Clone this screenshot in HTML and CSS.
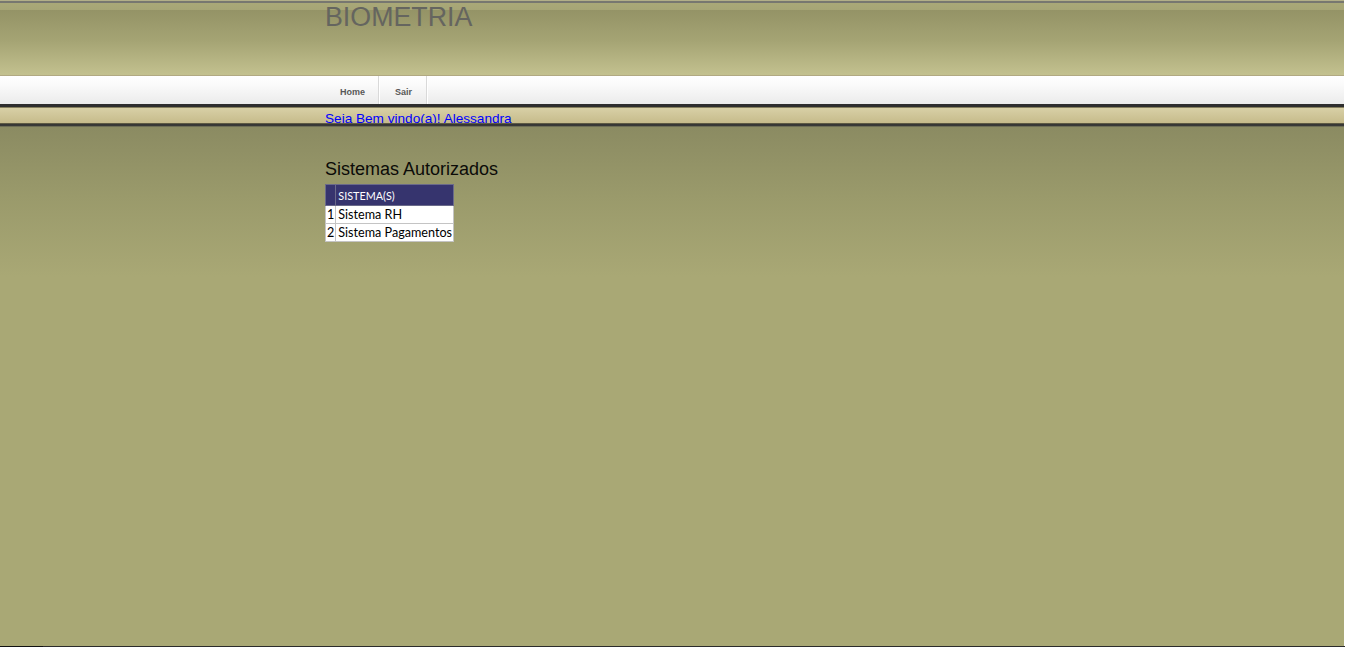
FILE: index.html
```html
<!DOCTYPE html>
<html lang="pt">
<head>
<meta charset="utf-8">
<title>BIOMETRIA</title>
<link rel="stylesheet" href="styles.css">
</head>
<body>
<div class="page">
  <header class="header">
    <div class="wrap">
      <h1 class="brand">BIOMETRIA</h1>
    </div>
  </header>
  <nav class="nav">
    <div class="wrap nav-inner">
      <a class="nav-item" href="#">Home</a>
      <a class="nav-item" href="#">Sair</a>
    </div>
  </nav>
  <div class="rule-dark"></div>
  <div class="welcome-band">
    <div class="wrap">
      <a class="welcome" href="#">Seja Bem vindo(a)! Alessandra</a>
    </div>
  </div>
  <div class="rule-bottom"></div>
  <main class="main">
    <div class="wrap">
      <h2 class="title">Sistemas Autorizados</h2>
      <table class="grid">
        <thead>
          <tr><th class="idx"></th><th>SISTEMA(S)</th></tr>
        </thead>
        <tbody>
          <tr><td class="idx">1</td><td>Sistema RH</td></tr>
          <tr><td class="idx">2</td><td>Sistema Pagamentos</td></tr>
        </tbody>
      </table>
    </div>
  </main>
</div>
<div class="bottom-bar"><span class="bottom-bar-left"></span></div>
</body>
</html>
```

FILE: styles.css
```css
html, body {
  margin: 0;
  padding: 0;
  background: #ffffff;
  overflow: hidden;
}

body {
  font-family: "Liberation Sans", Arial, sans-serif;
}

.page {
  width: 1344px;
  height: 646px;
  display: flex;
  flex-direction: column;
  background: #a9a875;
}

.wrap {
  width: 694px;
  margin: 0 auto;
  box-sizing: border-box;
}

.header {
  height: 75px;
  box-sizing: border-box;
  border-top: 1px solid #b2af88;
  background:
    linear-gradient(to bottom, #777770 0, #777770 2px, #a9a878 2px, #a6a576 9px, #949366 9px, #a5a474 40px, #c3c18f 74px);
}

.brand {
  margin: 0;
  padding-top: 1px;
  font-weight: normal;
  font-size: 26.8px;
  line-height: 30px;
  color: #65655f;
  letter-spacing: 0;
}

.nav {
  height: 29px;
  box-sizing: border-box;
  border-top: 1px solid #b1a982;
  background: linear-gradient(to bottom, #ffffff 0, #fbfbfb 8px, #ebebeb 28px);
}

.nav-inner {
  display: flex;
  height: 28px;
}

.nav-item {
  display: block;
  padding: 2px 13px 0 15px;
  line-height: 28px;
  font-size: 9px;
  font-weight: bold;
  color: #585858;
  text-decoration: none;
  border-right: 1px solid #d9d9d9;
  box-shadow: 1px 0 0 #ffffff;
  box-sizing: border-box;
  height: 28px;
}

.nav-item + .nav-item {
  padding: 2px 14px 0 16px;
}

.rule-dark {
  height: 3px;
  background: #2e2e2e;
}

.welcome-band {
  height: 16px;
  box-sizing: border-box;
  border-top: 1px solid #857f5d;
  background: linear-gradient(to bottom, #d8d0a6, #c6bb8b);
}

.welcome {
  display: inline-block;
  padding-top: 3px;
  font-size: 13.6px;
  line-height: 15px;
  color: #0000ff;
  text-decoration: underline;
}

.rule-bottom {
  height: 4px;
  background: linear-gradient(to bottom, #5e5a44 0, #5e5a44 1px, #353533 1px, #3a3a38 3px, #6d6d55 3px);
}

.main {
  flex: 1;
  background: linear-gradient(to bottom, #8b8b62 0, #9a9a6b 70px, #a9a875 150px, #a9a875 100%);
}

.title {
  margin: 32px 0 4px 0;
  font-weight: normal;
  font-size: 18px;
  line-height: 21px;
  color: #0b0b08;
}

.grid {
  border-collapse: collapse;
  font-family: Lato, "Open Sans", sans-serif;
  background: #ffffff;
  border: 1px solid #c4c4c4;
}

.grid th {
  height: 20px;
  padding: 0 0 0 2px;
  background: #36346e;
  color: #ffffff;
  font-weight: normal;
  font-size: 10.8px;
  text-align: left;
  border: 1px solid #6a6a8a;
}

.grid td {
  height: 17px;
  padding: 0 1px 0 2px;
  font-size: 12.6px;
  color: #000000;
  border: 1px solid #c4c4c4;
  white-space: nowrap;
}

.grid .idx {
  width: 7px;
  padding: 0 1px 0 1px;
  text-align: left;
}

.bottom-bar {
  display: flex;
  height: 1px;
  width: 1345px;
  background: #2b2b2b;
}

.bottom-bar-left {
  width: 43px;
  background: #111111;
}
```
